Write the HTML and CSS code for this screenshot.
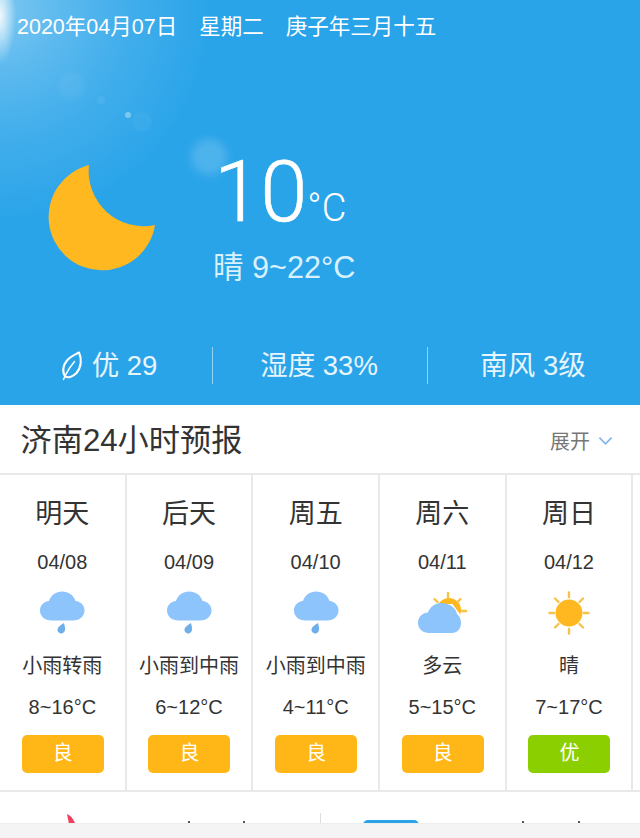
FILE: index.html
```html
<!DOCTYPE html>
<html lang="zh">
<head>
<meta charset="utf-8">
<title>济南天气</title>
<link rel="stylesheet" href="styles.css">
</head>
<body>
<section class="hero">
  <div class="flare flare-a"></div>
  <div class="flare flare-b"></div>
  <div class="flare flare-c"></div>
  <div class="flare flare-d"></div>
  <div class="flare flare-e"></div>
  <div class="date-line"><span>2020年04月07日</span><span>星期二</span><span>庚子年三月十五</span></div>
  <div class="now">
    <svg class="moon" viewBox="0 0 108 106"><path d="M41 0A53.500 53.500 0 1 0 107 60A55 55 0 0 1 41 0Z" fill="#ffb81f"/></svg>
    <div class="now-text">
      <div class="temp"><span class="temp-num">10</span><span class="temp-unit">°C</span></div>
      <div class="range">晴 9~22°C</div>
    </div>
  </div>
  <div class="stats">
    <div class="stat">
      <svg class="leaf" viewBox="0 0 22 30"><path d="M18 1.500C21 8 20.500 16 15.500 22C11.500 26 6.500 27.500 4 25C1 21 2 14 6 9.500C9 5.500 14 3.500 18 1.500Z" fill="none" stroke="#fff" stroke-width="2.100" stroke-linejoin="round"/><path d="M2.500 28.500L4 25M4 25C6.500 20 9.500 15 13.500 10.500" fill="none" stroke="#fff" stroke-width="1.500" stroke-linecap="round"/></svg>
      <span>优 29</span>
    </div>
    <div class="stat">湿度 33%</div>
    <div class="stat">南风 3级</div>
  </div>
</section>

<header class="head">
  <h2 class="head-title">济南24小时预报</h2>
  <div class="head-more"><span>展开</span><svg class="chev" viewBox="0 0 16 10"><path d="M1.500 1.500L8 8L14.500 1.500" fill="none" stroke="#7fb6ee" stroke-width="1.800"/></svg></div>
</header>

<section class="days">
  <article class="day">
    <div class="day-name">明天</div><div class="day-date">04/08</div>
    <svg class="wx" viewBox="0 0 46 44"><use href="#rain"/></svg>
    <div class="day-desc">小雨转雨</div><div class="day-temp">8~16°C</div><div class="aqi good">良</div>
  </article>
  <article class="day">
    <div class="day-name">后天</div><div class="day-date">04/09</div>
    <svg class="wx" viewBox="0 0 46 44"><use href="#rain"/></svg>
    <div class="day-desc">小雨到中雨</div><div class="day-temp">6~12°C</div><div class="aqi good">良</div>
  </article>
  <article class="day">
    <div class="day-name">周五</div><div class="day-date">04/10</div>
    <svg class="wx" viewBox="0 0 46 44"><use href="#rain"/></svg>
    <div class="day-desc">小雨到中雨</div><div class="day-temp">4~11°C</div><div class="aqi good">良</div>
  </article>
  <article class="day">
    <div class="day-name">周六</div><div class="day-date">04/11</div>
    <svg class="wx" viewBox="0 0 46 44"><use href="#cloudy"/></svg>
    <div class="day-desc">多云</div><div class="day-temp">5~15°C</div><div class="aqi good">良</div>
  </article>
  <article class="day">
    <div class="day-name">周日</div><div class="day-date">04/12</div>
    <svg class="wx" viewBox="0 0 46 44"><use href="#sunny"/></svg>
    <div class="day-desc">晴</div><div class="day-temp">7~17°C</div><div class="aqi best">优</div>
  </article>
  <div class="day day-peek"></div>
</section>

<section class="next">
  <div class="next-col">
    <svg class="next-icon" viewBox="0 0 12 10"><path d="M0 0C3 1 6 4 8 9L10 10L2 10Z" fill="#ee3f5c"/></svg>
    <i class="tick tick-1"></i><i class="tick tick-2"></i>
  </div>
  <div class="next-rule"></div>
  <div class="next-col">
    <div class="next-tab"></div>
    <i class="tick tick-3"></i><i class="tick tick-4"></i>
  </div>
</section>
<footer class="foot"></footer>

<svg class="defs" width="0" height="0">
  <defs>
    <g id="rain">
      <path d="M12.500 29.500C6 29.500 1 25.500 1 19.500C1 14 5 10.500 10 10C12 4 17 0.500 23 0.500C29.500 0.500 34.500 4 36.500 10C41.500 10.500 45.500 14 45.500 19.500C45.500 25.500 40.500 29.500 34 29.500Z" fill="#8dc4fb"/>
      <path d="M25 32C25.500 35 26.500 37 26 39C25.500 41.500 23.500 43 21.500 42.500C19.500 42 18 40 18.500 38C19 35.500 22.500 33.500 25 32Z" fill="#6faee8"/>
    </g>
    <g id="cloudy">
      <circle cx="30" cy="19" r="12" fill="#ffb81f"/>
      <path d="M29 2V7M15.500 8L18.500 11M41.500 8L38.500 11M42.500 20H47" stroke="#f5c24a" stroke-width="2.400" fill="none" stroke-linecap="round"/>
      <path d="M33.500 13L43 26L43 44L20 44L20 13Z" fill="#fff"/>
      <path d="M10 42C4 42 -1 38 -1 32C-1 26 3 22 9 21.500C11 16 16 12 22 12C31 12 37 17 38 23C40.500 25 42 28 42 32C42 38 38 42 33 42Z" fill="#8dc4fb"/>
    </g>
    <g id="sunny">
      <circle cx="23" cy="22" r="13.500" fill="#ffb81f"/>
      <path d="M23 1.500V6M23 38V42.500M3.500 22H8M38 22H42.500M9 7.500L12.500 11M37 7.500L33.500 11M9 36.500L12.500 33M37 36.500L33.500 33" stroke="#f5c24a" stroke-width="2.400" fill="none" stroke-linecap="round"/>
    </g>
  </defs>
</svg>
</body>
</html>
```
FILE: styles.css
```css
* { box-sizing: border-box; margin: 0; padding: 0; }
html, body { height: 100%; }
body {
  width: 640px;
  height: 838px;
  overflow: hidden;
  background: #fff;
  font-family: "Liberation Sans", "Noto Sans CJK SC", sans-serif;
  color: #333;
}
.defs { position: absolute; }

.hero {
  position: relative;
  height: 405px;
  overflow: hidden;
  color: #fff;
  background:
    radial-gradient(ellipse 16px 48px at 0 16px, rgba(255,255,255,.9) 0, rgba(255,255,255,.45) 50%, rgba(255,255,255,0) 100%),
    radial-gradient(circle at 0 10px, rgba(255,255,255,.38) 0, rgba(255,255,255,.24) 60px, rgba(255,255,255,.12) 120px, rgba(255,255,255,0) 210px),
    #2aa4e9;
}
.flare { position: absolute; border-radius: 50%; }
.flare-a { left: 58px; top: 72px; width: 28px; height: 28px; background: rgba(255,255,255,.05); filter: blur(2px); }
.flare-b { left: 97px; top: 96px; width: 8px; height: 8px; background: rgba(255,255,255,.06); }
.flare-c { left: 125px; top: 112px; width: 6px; height: 6px; background: rgba(255,255,255,.35); }
.flare-d { left: 132px; top: 112px; width: 20px; height: 20px; background: rgba(255,255,255,.04); }
.flare-e { left: 191px; top: 139px; width: 36px; height: 36px; background: rgba(255,255,255,.17); filter: blur(4px); }

.date-line {
  position: relative;
  display: flex;
  gap: 22px;
  padding: 15px 0 0 17px;
  font-size: 21.500px;
  line-height: 25px;
}

.now {
  position: relative;
  display: flex;
  align-items: flex-start;
  padding: 117px 0 0 48px;
}
.moon { display: block; width: 108px; height: 106px; margin-top: 8px; overflow: visible; }
.now-text { margin-left: 58px; }
.temp { display: flex; align-items: baseline; margin-top: -7px; height: 82px; }
.temp-num {
  font-family: Roboto, "Liberation Sans", sans-serif;
  font-weight: 300;
  font-size: 85px;
  line-height: 84px;
  letter-spacing: -1px;
  -webkit-text-stroke: 0.6px #fff;
}
.temp-unit { font-size: 38px; line-height: 40px; margin-left: 1px; font-family: Roboto, "Liberation Sans", sans-serif; font-weight: 300; }
.range { margin-top: 17px; margin-left: -1px; font-size: 30.600px; line-height: 36px; white-space: nowrap; color: #d9f0fd; }

.stats {
  position: absolute;
  left: 0;
  right: 0;
  top: 347px;
  display: flex;
  height: 37px;
}
.stat {
  flex: 0 0 215px;
  display: flex;
  align-items: center;
  justify-content: center;
  gap: 9px;
  font-size: 27.500px;
  line-height: 37px;
  white-space: nowrap;
  color: #e6f5fe;
  padding-right: 2px;
}
.stat:first-child { flex-basis: 212px; padding: 0 0 0 6px; }
.stat:last-child { flex-basis: 213px; }
.stat + .stat { border-left: 1px solid rgba(255,255,255,.5); }
.leaf { width: 22px; height: 30px; }

.head {
  display: flex;
  align-items: center;
  justify-content: space-between;
  height: 70px;
  padding: 3px 27px 0 20.500px;
  border-bottom: 2px solid #e9e9e9;
}
.head-title { font-size: 31.200px; line-height: 40px; font-weight: 400; color: #333; }
.head-more { display: flex; align-items: center; gap: 8px; font-size: 20px; color: #777; }
.chev { width: 15px; height: 10px; }

.days {
  display: flex;
  height: 317px;
  border-bottom: 2px solid #e9e9e9;
}
.day {
  flex: 0 0 126.660px;
  display: flex;
  flex-direction: column;
  align-items: center;
  border-right: 2px solid #e9e9e9;
  padding-top: 22px;
}
.day-peek { flex: 1 1 auto; border: 0; }
.day-name { font-size: 27px; line-height: 34px; color: #333; }
.day-date { margin-top: 19px; font-size: 20px; line-height: 24px; color: #333; }
.wx { display: block; width: 46px; height: 44px; margin-top: 17px; overflow: visible; }
.day-desc { margin-top: 18px; font-size: 20px; line-height: 26px; white-space: nowrap; color: #333; }
.day-temp { margin-top: 16px; font-size: 20px; line-height: 24px; color: #333; }
.aqi {
  width: 82px;
  height: 38px;
  margin: 16px 0 0 1px;
  border-radius: 5px;
  font-size: 20px;
  line-height: 36px;
  text-align: center;
  color: #fff;
}
.good { background: #ffb718; }
.best { background: #8ccf00; }

.next {
  position: relative;
  display: flex;
  height: 31px;
  overflow: hidden;
}
.next-col { position: relative; flex: 1 1 0; }
.next-rule { width: 1px; margin-top: 21px; background: #ddd; }
.next-icon { position: absolute; left: 67px; top: 22px; width: 12px; height: 10px; }
.next-tab { position: absolute; left: 42px; top: 28px; width: 56px; height: 10px; border-radius: 5px 5px 0 0; background: #2aa4e9; }
.tick { position: absolute; top: 29px; width: 2px; height: 3px; background: #555; }
.tick-1 { left: 188px; }
.tick-2 { left: 243px; }
.tick-3 { left: 201px; }
.tick-4 { left: 257px; }
.foot { height: 15px; background: #f4f4f4; border-top: 1px solid #eee; }
```
